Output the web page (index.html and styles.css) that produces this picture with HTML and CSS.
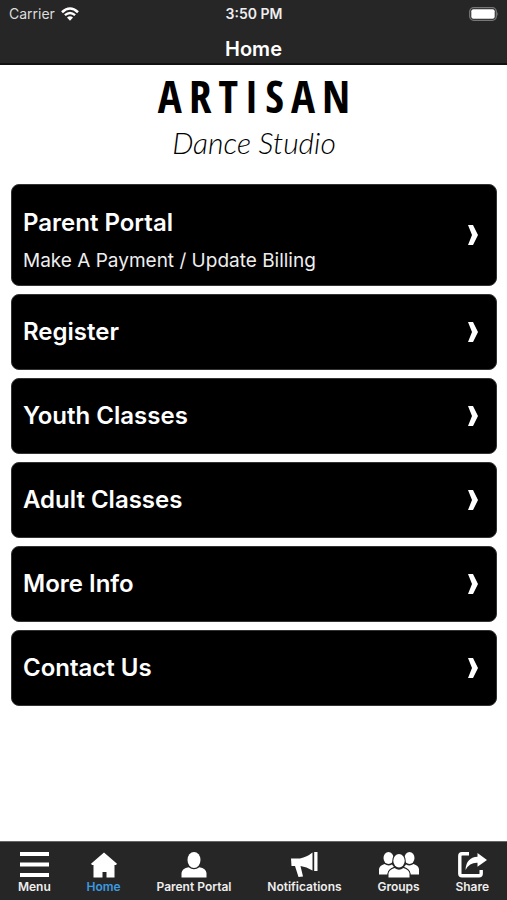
FILE: index.html
```
<!DOCTYPE html>
<html lang="en">
<head>
    <meta charset="UTF-8">
    <meta name="viewport" content="width=device-width, initial-scale=1.0">
    <title>Artisan Dance Studio</title>
    <link rel="stylesheet" href="styles.css">
</head>
<body>
    <header class="header">
        <div class="status">
            <div class="carrier">
                <span>Carrier</span>
                <svg class="wifi" viewBox="0 0 18 14" aria-hidden="true">
                    <path d="M1 5.2 Q9 -2.2 17 5.2" fill="none" stroke="#fff" stroke-width="2.6"/>
                    <path d="M3.9 8.2 Q9 3.6 14.1 8.2" fill="none" stroke="#fff" stroke-width="2.4"/>
                    <path d="M6 10.5 Q9 8.1 12 10.5 L9 13.8 Z" fill="#fff"/>
                </svg>
            </div>
            <span class="time">3:50 PM</span>
            <svg class="battery" viewBox="0 0 30 14" aria-hidden="true">
                <rect x="0.7" y="0.7" width="26.6" height="12.6" rx="4" fill="none" stroke="#77777a" stroke-width="1.3"/>
                <rect x="2.3" y="2.3" width="23.4" height="9.4" rx="2" fill="#fff"/>
                <path d="M28.3 4.8 Q30 7 28.3 9.2 Z" fill="#77777a"/>
            </svg>
        </div>
        <h1 class="title">Home</h1>
    </header>

    <main class="content">
        <div class="logo">
            <div class="logo-name">ARTISAN</div>
            <div class="logo-sub">Dance Studio</div>
        </div>
        <nav class="cards">
            <a class="card" href="#portal">
                <div class="card-text">
                    <h2>Parent Portal</h2>
                    <p>Make A Payment / Update Billing</p>
                </div>
                <svg class="arrow" viewBox="0 0 10 20" aria-hidden="true"><path d="M0 0H5L10 10L5 20H0L4 10Z"/></svg>
            </a>
            <a class="card" href="#register">
                <h2>Register</h2>
                <svg class="arrow" viewBox="0 0 10 20" aria-hidden="true"><path d="M0 0H5L10 10L5 20H0L4 10Z"/></svg>
            </a>
            <a class="card" href="#youth">
                <h2>Youth Classes</h2>
                <svg class="arrow" viewBox="0 0 10 20" aria-hidden="true"><path d="M0 0H5L10 10L5 20H0L4 10Z"/></svg>
            </a>
            <a class="card" href="#adult">
                <h2>Adult Classes</h2>
                <svg class="arrow" viewBox="0 0 10 20" aria-hidden="true"><path d="M0 0H5L10 10L5 20H0L4 10Z"/></svg>
            </a>
            <a class="card" href="#info">
                <h2>More Info</h2>
                <svg class="arrow" viewBox="0 0 10 20" aria-hidden="true"><path d="M0 0H5L10 10L5 20H0L4 10Z"/></svg>
            </a>
            <a class="card" href="#contact">
                <h2>Contact Us</h2>
                <svg class="arrow" viewBox="0 0 10 20" aria-hidden="true"><path d="M0 0H5L10 10L5 20H0L4 10Z"/></svg>
            </a>
        </nav>
    </main>

    <nav class="tabs">
        <button class="tab" type="button">
            <svg width="29" height="26" viewBox="0 0 29 26" aria-hidden="true">
                <path d="M0 0H29V4H0ZM0 10.5H29V14.5H0ZM0 21H29V25H0Z"/>
            </svg>
            Menu
        </button>
        <button class="tab active" type="button">
            <svg width="26" height="26" viewBox="0 0 26 26" aria-hidden="true">
                <path d="M13 0.5L26 11.8L25 13H23.5V25.5H15.5V20H11.5V25.5H2.5V13H1L0 11.8Z"/>
            </svg>
            Home
        </button>
        <button class="tab" type="button">
            <svg width="26" height="26" viewBox="0 0 26 26" aria-hidden="true">
                <ellipse cx="13" cy="8" rx="6.5" ry="8"/>
                <path d="M0.5 25.5V21Q1 16.5 7.6 15.2Q13 19.5 18.4 15.2Q25 16.5 25.5 21V25.5Z"/>
            </svg>
            Parent Portal
        </button>
        <button class="tab" type="button">
            <svg width="27" height="26" viewBox="0 0 27 26" aria-hidden="true">
                <path d="M0 6.5H9Q16 5 21.5 0.5V18.5Q15.5 14.5 9.5 14L12 24.5L7.5 25L4 14H0.5Z"/>
                <path d="M23.2 0H26.5V19H23.2Z"/>
            </svg>
            Notifications
        </button>
        <button class="tab" type="button">
            <svg width="40" height="26" viewBox="0 0 40 26" aria-hidden="true">
                <ellipse cx="9.5" cy="6" rx="5" ry="6"/>
                <ellipse cx="30.5" cy="6" rx="5" ry="6"/>
                <path d="M0 22.5V17Q0.5 13.5 5.5 12Q9 14.5 13 12.5L15 15Q9 17.5 8.5 22.5Z"/>
                <path d="M40 22.5V17Q39.5 13.5 34.5 12Q31 14.5 27 12.5L25 15Q31 17.5 31.5 22.5Z"/>
                <ellipse class="front" cx="20" cy="8.8" rx="5.7" ry="6.8"/>
                <path class="front" d="M9.5 25.5V21.5Q10 17.5 15.6 16Q20 19.4 24.4 16Q30 17.5 30.5 21.5V25.5Z"/>
            </svg>
            Groups
        </button>
        <button class="tab" type="button">
            <svg width="29" height="26" viewBox="0 0 29 26" aria-hidden="true">
                <path d="M11 1.8H4Q1.8 1.8 1.8 4V21.5Q1.8 23.7 4 23.7H21Q23.2 23.7 23.2 21.5V18" fill="none" stroke="#fff" stroke-width="3.4"/>
                <path d="M7.5 18Q8 5.5 19.5 4.8V1L29 8L19.5 14.8V10.8Q11.5 10.5 7.5 18Z"/>
            </svg>
            Share
        </button>
    </nav>
</body>
</html>
```

FILE: styles.css
```
* {
    box-sizing: border-box;
}
body {
    margin: 0;
    min-height: 100vh;
    display: flex;
    flex-direction: column;
    background-color: #fff;
    font-family: Inter, "Liberation Sans", sans-serif;
}
h1, h2, p {
    margin: 0;
}

/* top bar */
.header {
    background-color: #262626;
    border-bottom: 2px solid #111;
    color: #fff;
}
.status {
    display: grid;
    grid-template-columns: 1fr auto 1fr;
    align-items: center;
    height: 27px;
    padding: 0 8px 0 9px;
    font-size: 14px;
}
.carrier {
    display: flex;
    align-items: center;
    gap: 6px;
    color: #ddd;
}
.wifi {
    width: 18px;
    height: 14px;
}
.time {
    font-weight: 600;
    color: #eee;
}
.battery {
    width: 30px;
    height: 14px;
    justify-self: end;
}
.title {
    font-size: 20px;
    font-weight: 600;
    line-height: 24px;
    padding: 10px 0 2px;
    text-align: center;
}

/* content */
.content {
    flex: 1;
    padding: 8px 10px 20px 11px;
}
.logo {
    display: flex;
    flex-direction: column;
    align-items: center;
    margin-bottom: 19px;
    color: #000;
}
.logo-name {
    font-family: "Open Sans Condensed", "Liberation Sans Narrow", "DejaVu Sans Condensed", sans-serif;
    font-size: 45px;
    font-weight: 800;
    line-height: 46px;
    letter-spacing: 7px;
    margin-right: -7px;
}
.logo-sub {
    font-family: "Lato Light", Lato, sans-serif;
    font-size: 30px;
    font-weight: 300;
    font-style: italic;
    line-height: 46px;
}
.cards {
    display: flex;
    flex-direction: column;
    gap: 8px;
}
.card {
    display: flex;
    align-items: center;
    justify-content: space-between;
    min-height: 76px;
    padding: 10px 18px 10px 11px;
    border: 1px solid #333;
    border-radius: 8px;
    background-color: #000;
    color: #fff;
    text-decoration: none;
}
.card-text {
    padding-top: 12px;
}
.card h2 {
    font-size: 24px;
    font-weight: 600;
    line-height: 32px;
}
.card p {
    margin-top: 8px;
    font-size: 19px;
    line-height: 28px;
    color: #eee;
}
.arrow {
    width: 10px;
    height: 20px;
    fill: #fff;
}

/* bottom tabs */
.tabs {
    display: flex;
    justify-content: space-around;
    padding: 10px 0 5px;
    border-top: 1px solid #666;
    background-color: #262626;
}
.tab {
    display: flex;
    flex-direction: column;
    align-items: center;
    gap: 1px;
    padding: 0;
    border: 0;
    background: none;
    color: #eee;
    font-family: inherit;
    font-size: 12px;
    font-weight: 600;
    line-height: 16px;
    cursor: pointer;
}
.tab svg {
    fill: #fff;
}
.tab .front {
    stroke: #262626;
    stroke-width: 2px;
    paint-order: stroke;
}
.tab.active {
    color: #3b9ae0;
}
```
